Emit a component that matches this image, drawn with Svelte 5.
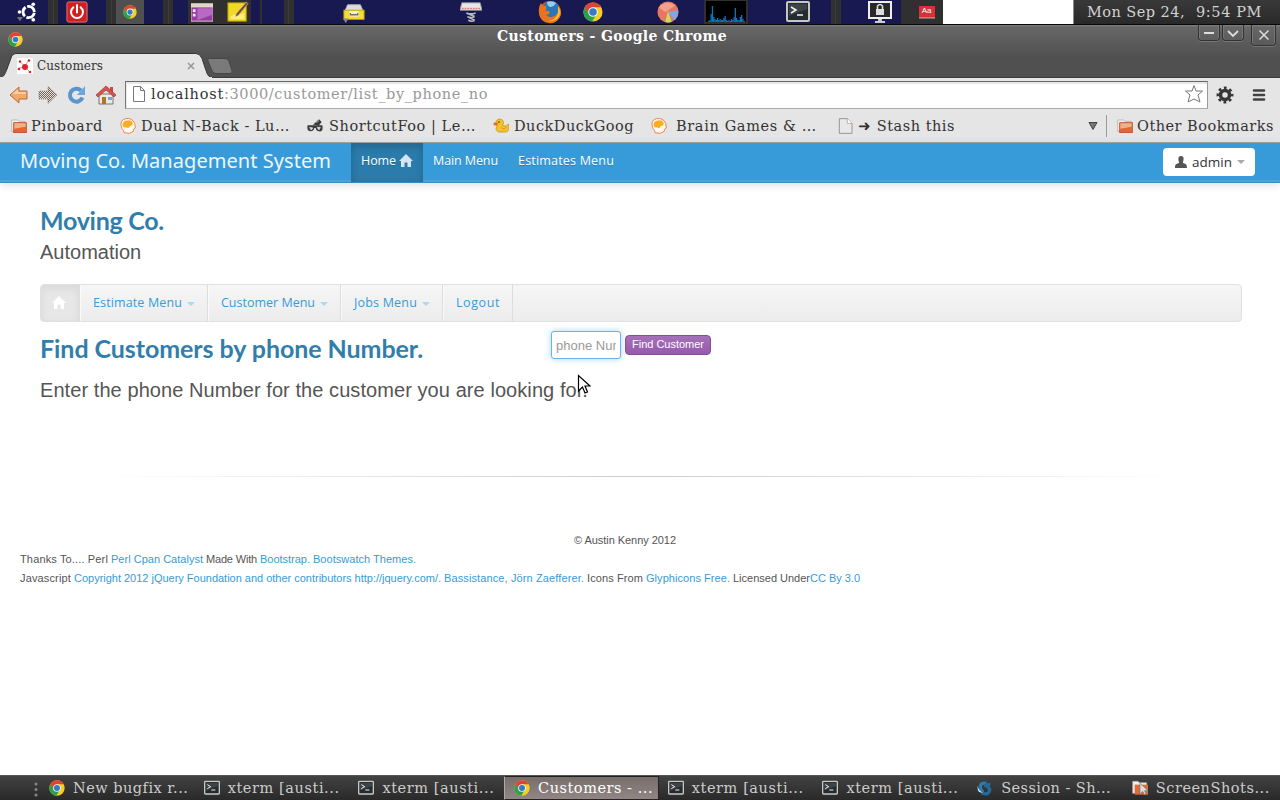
<script>
  // Spreads a label over an exact width through its letter spacing.
  function fit(node, width) {
    if (!width) return;
    const natural = node.getBoundingClientRect().width;
    const count = [...node.textContent].length;
    node.style.letterSpacing = `${(width - natural) / count}px`;
  }

  const cells = [
    { w: 48, tone: 'navy', icon: 'ubuntu', x: 17, iw: 20 },
    { w: 10, tone: 'grip' },
    { w: 48, tone: 'navy', icon: 'power', x: 8, iw: 22 },
    { w: 10, tone: 'grip' },
    { w: 28, tone: 'lit', icon: 'chrome', x: 7, iw: 14 },
    { w: 19, tone: 'navy' },
    { w: 10, tone: 'grip' },
    { w: 15, tone: 'navy' },
    { w: 32, tone: 'dark', icon: 'window', x: 3, iw: 22 },
    { w: 31, tone: 'dark', icon: 'note', x: 7, iw: 22 },
    { w: 9, tone: 'navy' },
    { w: 2, tone: 'dark' },
    { w: 22, tone: 'navy' },
    { w: 10, tone: 'grip' },
    { w: 160, tone: 'navy', icon: 'cabinet', x: 49, iw: 22 },
    { w: 80, tone: 'navy', icon: 'spring', x: 6, iw: 22 },
    { w: 45, tone: 'navy', icon: 'firefox', x: 4, iw: 24 },
    { w: 68, tone: 'navy', icon: 'chrome', x: 4, iw: 20 },
    { w: 57, tone: 'navy', icon: 'pie', x: 10, iw: 22 },
    { w: 44, tone: 'dark', icon: 'graph', x: 2, iw: 40 },
    { w: 83, tone: 'navy', icon: 'terminal', x: 38, iw: 24 },
    { w: 10, tone: 'grip' },
    { w: 60, tone: 'navy', icon: 'lock', x: 27, iw: 24 },
    { w: 42, tone: 'dark', icon: 'dictionary', x: 18, iw: 16 },
    { w: 131, tone: 'white' }
  ];

  const bookmarks = [
    { x: 11, icon: 'folder', w: 72, gap: 4, text: 'Pinboard' },
    { x: 17, icon: 'brain', w: 149, gap: 5, text: 'Dual N-Back - Lu…' },
    { x: 17, icon: 'mask', w: 147, gap: 6, text: 'ShortcutFoo | Le…' },
    { x: 17, icon: 'duck', w: 120, gap: 5, text: 'DuckDuckGoog' },
    { x: 17, icon: 'brain', w: 141, gap: 9, text: 'Brain Games & …' },
    { x: 21, icon: 'page', w: 97, gap: 4, text: '➜ Stash this' }
  ];

  const tasks = [
    { icon: 'chrome', text: 'New bugfix r...', w: 115 },
    { icon: 'terminal', text: 'xterm [austi...', w: 112 },
    { icon: 'terminal', text: 'xterm [austi...', w: 112 },
    { icon: 'chrome', text: 'Customers - ...', w: 115, active: true },
    { icon: 'terminal', text: 'xterm [austi...', w: 112 },
    { icon: 'terminal', text: 'xterm [austi...', w: 112 },
    { icon: 'swirl', text: 'Session - Sh...', w: 110 },
    { icon: 'shots', text: 'ScreenShots...', w: 114 }
  ];

  const menus = [
    { text: 'Estimate Menu', w: 89, cell: 128, caret: true },
    { text: 'Customer Menu', w: 94, cell: 133, caret: true },
    { text: 'Jobs Menu', w: 63, cell: 102, caret: true },
    { text: 'Logout', w: 44, cell: 70, caret: false }
  ];

  const bars = [1, 2, 8, 16, 5, 3, 2, 4, 2, 3, 2, 2, 4, 6, 2, 1, 2, 1, 3, 2, 5, 14, 4, 2, 2, 5, 7, 3, 1];
</script>

{#snippet icon(name, w)}
  {#if name === 'graph'}
    <svg width={w} height="22" viewBox="0 0 40 22">
      <rect width="40" height="21" fill="#000" />
      {#each bars as h, i}<rect x={2 + i * 1.27} y={21 - h} width="1.3" height={h} fill="#0878bd" />{/each}
    </svg>
  {:else}
    <svg width={w} height={w} viewBox="0 0 24 24">
      {#if name === 'ubuntu'}
        <circle cx="14" cy="12" r="6.8" fill="none" stroke="#fff" stroke-width="3.4" stroke-dasharray="12.2 2" stroke-dashoffset="-1" />
        <g fill="#fff"><circle cx="3" cy="12" r="2.2" /><circle cx="19.500" cy="2.700" r="2.200" /><circle cx="19.500" cy="21.300" r="2.200" /></g>
        <path d="M0 18h7l-3.5 5z" fill="#777" />
      {:else if name === 'power'}
        <rect x="1" y="1" width="22" height="22" rx="2" fill="#cf2020" stroke="#e97878" />
        <path d="M8 7a6.500 6.500 0 1 0 8 0M12 4.5v8" fill="none" stroke="#fff" stroke-width="2.200" stroke-linecap="round" />
      {:else if name === 'chrome'}
        <circle cx="12" cy="12" r="11.5" fill="#f7cf24" />
        <path d="M2 6.3A11.5 11.5 0 0 1 22 6.3H12l-5 8.6z" fill="#dc4535" />
        <path d="M2 6.3A11.5 11.5 0 0 0 11 23.5l5.2-8.7-9-.1z" fill="#28a34a" />
        <circle cx="12" cy="12" r="5.8" fill="#eef4fb" /><circle cx="12" cy="12" r="4.5" fill="#367bc5" />
      {:else if name === 'window'}
        <rect x="0" y="3" width="24" height="19" fill="#9a3aa9" stroke="#d9d5c0" />
        <rect x="0" y="3" width="24" height="4" fill="#ded9c2" />
        <path d="M7 8h16v7L7 21z" fill="#b869c3" /><path d="M2 9h3v3H2zM2 14h3v3H2z" fill="#eee" />
      {:else if name === 'note'}
        <rect x="1" y="2" width="20" height="20" fill="#f3d927" stroke="#b59800" />
        <path d="M4 17q5-4 9-2l6-2v7H4z" fill="#fff080" /><path d="M10 14L21 1l2 2-11 13-3 1z" fill="#715039" stroke="#e5c791" stroke-width=".6" />
      {:else if name === 'cabinet'}
        <path d="M5 4h14l3 7H2z" fill="#ddd" stroke="#aaa" /><rect x="1" y="10" width="22" height="10" fill="#f3dc38" stroke="#bca510" />
        <path d="M7 11h10v6H7z" fill="#f5f0d0" /><path d="M8 13v2h8v-2" fill="none" stroke="#77735c" stroke-width="1.500" /><path d="M0 19h6l-3 5z" fill="#888" />
      {:else if name === 'spring'}
        <path d="M2 2h20l2 8H0z" fill="#e8e8e8" stroke="#999" /><path d="M2 8h20" stroke="#d55" stroke-dasharray="2 1" />
        <path d="M7 13q5 2 10 0M7 13l9 4M8 17q4 2 8 0M8 17l8 4M9 21q4 2 7 0" fill="none" stroke="#bbb" stroke-width="1.700" />
      {:else if name === 'firefox'}
        <circle cx="12" cy="12" r="11" fill="#d6561b" /><circle cx="13" cy="9" r="8" fill="#2976b8" /><path d="M9 2q5-2 9 1-2 4-6 4-3-1-3-5z" fill="#8dd0f0" />
        <path d="M3 3q1 3 5 3 1 3-1 5 3-1 5 1-1 3-4 3 6 5 11-1 2-3 1-7 5 4 2 10-4 7-11 6Q2 22 1 13 0 7 3 3z" fill="#e8741d" />
        <path d="M20 6q5 7-1 13-5 3-9 2 8-1 10-8z" fill="#f7bd35" />
      {:else if name === 'pie'}
        <circle cx="12" cy="12" r="11.5" fill="#e97662" /><path d="M2 7q8-9 18-2L9 12z" fill="#f3a18b" /><path d="M12 12l11-2q1 6-4 11z" fill="#7fa9e5" /><path d="M12 11l4 11.5q-4 2-7 0z" fill="#c9dc5d" />
      {:else if name === 'terminal'}
        <rect x="1" y="2" width="22" height="19" rx="1" fill="#252c30" stroke="#c7c7c2" stroke-width="2" />
        <path d="M3 4h18v5L3 16z" fill="#4c5258" opacity=".6" /><path d="M5 7l5 3-5 3M11 15h6" fill="none" stroke="#f4f4f4" stroke-width="1.5" />
      {:else if name === 'lock'}
        <rect x="1" y="2" width="22" height="16" fill="#292929" stroke="#eee" stroke-width="2" /><path d="M8 9h8v6H8z" fill="#ddd" /><path d="M9.5 9V6q2.5-3 5 0v3" fill="none" stroke="#ddd" stroke-width="1.6" /><path d="M10 19h4v2h3v2H7v-2h3z" fill="#ccc" />
      {:else if name === 'dictionary'}
        <rect y="3" width="24" height="18" fill="#d43238" /><path d="M0 21h24" stroke="#eee" /><text x="4" y="14" font-size="12" fill="#fff" font-family="Liberation Sans">Aa</text>
      {:else if name === 'folder'}
        <path d="M1 3h9l2 2h9v15H1z" fill="#f4f4f2" stroke="#a5a5a5" /><rect x="4" y="7" width="19" height="15" fill="#df6736" stroke="#bb3c1b" /><path d="M5 8h17v5L5 16z" fill="#f3b087" />
      {:else if name === 'brain'}
        <path d="M6 22q0-4-3-6Q-2 4 8 1q10-2 14 7l1 7-3 2v3l-6 3z" fill="#fffaf3" stroke="#ed8548" stroke-width="1.5" /><path d="M4 12q-1-7 5-8 8-2 10 3 1 4-4 5-2 5-6 2-3 1-5-2z" fill="#fbae22" />
      {:else if name === 'mask'}
        <path d="M1 11h22q2 10-5 9-4 0-5-5h-2q-1 5-6 5-6-1-4-9zM9 10l9-8 4 4-4 5z" fill="#3b3b3b" /><path d="M4 14l5 1-3 3zM15 14h5l-2 4zM14 7l4-3" fill="#ddd" stroke="#ddd" />
      {:else if name === 'duck'}
        <path d="M6 13Q2 9 5 4q5-5 10 0 2 4-1 7 5 3 10-2 1 10-4 12H9q-7-3-3-8z" fill="#f5c327" stroke="#c18316" /><path d="M1 7h6v4H1z" fill="#e96721" /><circle cx="9" cy="6" r="1" /><path d="M13 15q4 3 7-1" fill="none" stroke="#ba830f" />
      {:else if name === 'page'}
        <path d="M2 1h12l7 7v15H2z" fill="#e8e8e8" stroke="#8b8b8b" stroke-width="1.3" /><path d="M14 1v7h7" fill="#fff" stroke="#999" />
      {:else if name === 'swirl'}
        <g fill="none" stroke-width="5"><path d="M14 5q-9-2-9 6 0 5 5 7" stroke="#297eae" /><path d="M20 7q-7-1-7 4M7 19q10 5 12-4 0-3-4-5" stroke="#236a99" /></g><path d="M1 8q1 9 8 11-8 0-8-6z" fill="#d8eaf5" />
      {:else if name === 'shots'}
        <path d="M1 2h8l2 2h11v16H1z" fill="#eee" stroke="#aaa" /><rect x="4" y="7" width="20" height="15" fill="#df6b36" /><path d="M12 5v16l4-4 3 5 2-1-2-5h5z" fill="#ddd" stroke="#777" />
      {/if}
    </svg>
  {/if}
{/snippet}

{#snippet house(fill)}
  <svg class="house" width="14" height="13" viewBox="0 0 14 13"><path d="M7 0l7 7h-2v6H8.500V8.500h-3V13H2V7H0z" {fill} /></svg>
{/snippet}

<main>
  <header class="panel">
    {#each cells as c}
      <div class="cell {c.tone}" style:width="{c.w}px" style:padding-left="{c.x ?? 0}px">
        {#if c.icon}{@render icon(c.icon, c.iw)}{/if}
      </div>
    {/each}
    <div class="clock"><span use:fit={98}>Mon Sep 24,</span><span class="hour" use:fit={66}>9:54 PM</span></div>
  </header>

  <section class="titlebar">
    <div class="caption">
      <span class="app">{@render icon('chrome', 15)}</span>
      <strong use:fit={230}>Customers - Google Chrome</strong>
      <div class="controls">
        <i class="ctl"><svg width="12" height="12"><path d="M1 6h10" stroke="#ddd" stroke-width="2" /></svg></i>
        <i class="ctl"><svg width="12" height="12"><path d="M1 4l5 5 5-5" fill="none" stroke="#ddd" stroke-width="1.8" /></svg></i>
        <i class="ctl close"><svg width="12" height="12"><path d="M1.500 1.500l9 9M10.500 1.500l-9 9" stroke="#ddd" stroke-width="1.500" /></svg></i>
      </div>
    </div>
    <div class="tabs">
      <div class="tab">
        <svg class="shape" width="212" height="25"><path d="M0 24.500C4 24 5 21 7 16L11 5Q12 .5 17 .5h179q4 0 6 5l4 12q2 7 6 7v1H0z" fill="#e5e5e5" stroke="#353535" /><path d="M0 24h212v1H0z" fill="#e5e5e5" /></svg>
        <svg class="fav" width="16" height="16"><rect width="16" height="16" fill="#fff" /><path d="M8 8L3 4M8 8l4-6M8 9l5 5M7 9l-5 1" stroke="#e99" /><g fill="#d82630"><circle cx="8" cy="9" r="3" /><circle cx="3" cy="3.500" r="1.200" /><circle cx="12" cy="2.500" r="1.300" /><circle cx="13" cy="14" r="1.300" /><circle cx="2" cy="11" r="1.300" /></g></svg>
        <span use:fit={66}>Customers</span>
        <svg class="x" width="8" height="8"><path d="M1 1l6 6M7 1L1 7" stroke="#999" stroke-width="1.6" /></svg>
      </div>
      <svg class="newtab" width="26" height="16"><path d="M2 .5h16q3 0 4 3l3 9q1 3-2 3H9q-3 0-4-3L1 3Q0 .5 2 .5z" fill="#7a7a7a" stroke="#454545" /></svg>
    </div>
  </section>

  <section class="toolbar">
    <svg width="20" height="20" viewBox="0 0 20 20"><path d="M1 10l9-8v4h8v8h-8v4z" fill="#f2a76b" stroke="#b96c34" /><path d="M3 9l6-5v3h8v2z" fill="#f9cca2" /></svg>
    <svg width="20" height="20" viewBox="0 0 20 20"><defs><pattern id="dots" width="2" height="2" patternUnits="userSpaceOnUse"><path d="M0 0h1v1H0zM1 1h1v1H1z" fill="#756050" /></pattern></defs><path d="M19 10l-9-8.500V6H1v8h9v4.500z" fill="url(#dots)" stroke="#8b8580" stroke-dasharray="1 1" /></svg>
    <svg width="20" height="20" viewBox="0 0 20 20"><path d="M15.500 12.500A6.500 6.500 0 1 1 14 5.500" fill="none" stroke="#5c94ce" stroke-width="4" /><path d="M18 1v9h-8z" fill="#6ca5dc" /></svg>
    <svg width="20" height="20" viewBox="0 0 20 20"><path d="M3 9h14v10H3z" fill="#eee9df" stroke="#777" /><path d="M14 2h3v6h-3z" fill="#c34a45" /><path d="M0 10l10-9 10 9-2 2-8-7-8 7z" fill="#d85453" stroke="#9d3433" stroke-width=".700" /><path d="M6 12h4v7H6z" fill="#ae7728" /><path d="M12 12h4v3h-4z" fill="#7ba4d9" /></svg>
    <div class="url">
      <svg width="12" height="16"><path d="M.5.500h7l4 4v11H.5zM7.500.500v4h4" fill="#fff" stroke="#777" /></svg>
      <span class="host" use:fit={73}>localhost</span><span class="path" use:fit={264}>:3000/customer/list_by_phone_no</span>
      <svg class="star" width="20" height="19" viewBox="0 0 20 19"><path d="M10 1.500l2 5.500h6.500l-4.500 4 2 7-6-3-6 3 2-7-4.500-4H8z" fill="#fff" stroke="#777" stroke-linejoin="round" /></svg>
    </div>
    <svg class="gear" width="18" height="18" viewBox="0 0 18 18"><circle cx="9" cy="9" r="4.500" fill="none" stroke="#373737" stroke-width="3.500" /><circle cx="9" cy="9" r="7.200" fill="none" stroke="#373737" stroke-width="2.500" stroke-dasharray="2.830 2.830" stroke-dashoffset="1.410" /></svg>
    <svg class="burger" width="14" height="14"><path d="M2 2.500h10M2 7h10M2 11.500h10" stroke="#414141" stroke-width="2.600" stroke-linecap="round" /></svg>
  </section>

  <section class="bookmarks">
    {#each bookmarks as b}
      <a href="#b" style:margin-left="{b.x}px" style:gap="{b.gap}px">{@render icon(b.icon, 16)}<span use:fit={b.w}>{b.text}</span></a>
    {/each}
    <svg class="more" width="10" height="8"><path d="M1 .5h8l-4 7z" fill="#777" stroke="#444" /></svg>
    <a class="other" href="#b">{@render icon('folder', 16)}<span use:fit={137}>Other Bookmarks</span></a>
  </section>

  <section class="page">
    <nav class="navbar">
      <a class="brand" href="#h"><span use:fit={311}>Moving Co. Management System</span></a>
      <a class="on" href="#h"><span use:fit={35}>Home</span>{@render house('#d4e6f2')}</a>
      <a href="#m"><span use:fit={65}>Main Menu</span></a>
      <a href="#e"><span use:fit={96}>Estimates Menu</span></a>
      <button class="user"><svg width="12" height="12"><path d="M6 0c3 0 3 3 2 6v1c3 1 4 1 4 5H0C0 8 1 8 4 7V6C3 3 3 0 6 0z" fill="#555" /></svg><span use:fit={40}>admin</span><i class="caret"></i></button>
    </nav>

    <div class="content">
      <h1><span use:fit={124}>Moving Co.</span></h1>
      <p class="lead">Automation</p>
      <nav class="sub">
        <a class="home" href="#h">{@render house('#fff')}</a>
        {#each menus as m}
          <a href="#m" style:width="{m.cell}px"><span use:fit={m.w}>{m.text}</span>{#if m.caret}<i class="caret"></i>{/if}</a>
        {/each}
      </nav>
      <div class="find">
        <h2><span use:fit={383}>Find Customers by phone Number.</span></h2>
        <input placeholder="phone Number" aria-label="phone Number" />
        <button class="go"><span use:fit={72}>Find Customer</span></button>
      </div>
      <p class="lead enter"><span use:fit={548}>Enter the phone Number for the customer you are looking for.</span></p>
      <svg class="pointer" width="14" height="21" viewBox="0 0 14 21"><path d="M1.500 1.500v15.500l4-4 2.500 6 2.500-1-2.500-6h5z" fill="#fff" stroke="#000" stroke-width="1.200" /></svg>
    </div>
    <hr />
    <footer>
      <p class="copy"><span use:fit={102}>© Austin Kenny 2012</span></p>
      <p><span use:fit={88}>Thanks To.... Perl</span><a href="#p" use:fit={92}>Perl Cpan Catalyst</a><span use:fit={51}>Made With</span><a href="#b" use:fit={50}>Bootstrap.</a><a href="#t" use:fit={103}>Bootswatch Themes.</a></p>
      <p><span use:fit={51}>Javascript</span><a href="#j" use:fit={367}>Copyright 2012 jQuery Foundation and other contributors http://jquery.com/.</a><a href="#z" use:fit={140}>Bassistance, Jörn Zaefferer.</a><span use:fit={56}>Icons From</span><a href="#g" use:fit={84}>Glyphicons Free.</a><span class="license"><span use:fit={77}>Licensed Under</span><a href="#c" use:fit={50}>CC By 3.0</a></span></p>
    </footer>
  </section>

  <footer class="taskbar">
    <svg class="handle" width="4" height="15"><g fill="#888"><circle cx="2" cy="2" r="1.500" /><circle cx="2" cy="7.500" r="1.500" /><circle cx="2" cy="13" r="1.500" /></g></svg>
    {#each tasks as t}
      <div class="task" class:active={t.active}>{@render icon(t.icon, 16)}<span use:fit={t.w}>{t.text}</span></div>
    {/each}
  </footer>
</main>

<style>
  :global(body) { margin: 0; overflow: hidden; }
  main { width: 1280px; height: 800px; display: flex; flex-direction: column; overflow: hidden; background: #fff; font-family: 'DejaVu Serif', serif; font-size: 14.500px; color: #333; }
  main :global(*) { box-sizing: border-box; }
  svg { display: block; flex: none; }
  span, strong, a { white-space: pre; }
  a { text-decoration: none; color: inherit; }

  .panel { height: 25px; display: flex; border-bottom: 1px solid #080808; background: #303030; flex: none; }
  .cell { flex: none; display: flex; align-items: center; }
  .navy { background: #171950; }
  .dark { background: #303030; }
  .lit { background: #505050; }
  .white { background: #fff; border-right: 1px solid #888; }
  .grip { background: linear-gradient(90deg, #303030 45%, #3d3d3d 45% 55%, #303030 55%); }
  .clock { padding-left: 13px; display: flex; align-items: center; gap: 11px; color: #d2d2d2; flex: 1; background: linear-gradient(#393939, #292929); }

  .titlebar { height: 53px; flex: none; background: linear-gradient(#828282 0, #676767 2px, #505050 32px, #505050); }
  .caption { height: 28px; display: flex; }
  .app { padding: 7px 0 0 8px; }
  .caption strong { margin-left: 474px; font-size: 14px; color: #fff; line-height: 23px; }
  .controls { margin-left: auto; padding-right: 4px; display: flex; gap: 2px; }
  .ctl { width: 22px; height: 16px; border: 1px solid #333; border-top: 0; border-radius: 0 0 4px 4px; box-shadow: 0 1px #777, inset -1px 0 #777, inset 1px 0 #777; display: grid; place-items: center; }
  .close { width: 25px; height: 21px; margin-left: 5px; }
  .tabs { display: flex; height: 25px; border-bottom: 1px solid #3b3b3b; }
  .tab { position: relative; width: 212px; height: 25px; flex: none; display: flex; align-items: center; padding-left: 17px; }
  .shape { position: absolute; left: 0; top: 0; }
  .fav { position: relative; margin-right: 4px; }
  .tab span { position: relative; font-size: 12px; }
  .x { position: relative; margin: 1px 0 0 auto; margin-right: 17px; }
  .newtab { margin: 5px 0 0 -5px; position: relative; }

  .toolbar { height: 32px; flex: none; background: #e5e5e5; display: flex; align-items: center; padding: 1px 0 0 9px; gap: 9px; }
  .url { width: 1083px; height: 28px; margin-top: 1px; flex: none; display: flex; align-items: center; padding: 0 3px 2px 7px; background: #fff; border: 1px solid #777; border-color: #666 #999 #aaa #777; box-shadow: inset 1px 2px #e8e8e8; }
  .toolbar .url { margin-top: 0; }
  .host { margin-left: 6px; }
  .path { color: #999; }
  .star { margin-left: auto; }
  .gear { margin-left: -1px; }
  .burger { margin-left: 9px; }

  .bookmarks { height: 33px; flex: none; background: #e5e5e5; border-bottom: 1px solid #a5a5a5; display: flex; align-items: center; }
  .bookmarks a { display: flex; align-items: center; flex: none; }
  .more { margin-left: auto; margin-right: 8px; }
  .bookmarks .other { padding-left: 10px; padding-right: 6px; gap: 4px; border-left: 1px solid #999; height: 22px; }

  .page { flex: 1; background: #fff; font-family: 'Liberation Sans', Arial, sans-serif; color: #555; }
  .navbar { height: 40px; background: #379bd9; border-bottom: 1px solid #378bc0; box-shadow: 0 2px 8px #0002, inset 0 -2px #4ba2dc; display: flex; padding-left: 20px; color: #fff; font: 12.500px 'Open Sans', sans-serif; text-shadow: 0 1px #0003; }
  .navbar a { height: 39px; display: flex; padding: 0 10px; line-height: 35px; }
  .navbar .brand { padding: 0 20px 0 0; font-size: 20px; line-height: 36px; font-family: 'Noto Sans', sans-serif; font-weight: 400; color: #eef6fc; text-shadow: none; }
  .on { background: #2b7cac; box-shadow: inset 0 3px 8px #0003; }
  .on .house { margin: 11px 0 0 3px; }
  .user { margin: 5px 25px 0 auto; width: 92px; height: 28px; border: 0; border-radius: 4px; background: #fff; color: #333; padding: 0 11px 1px 12px; display: flex; align-items: center; gap: 5px; font: 13.500px 'Open Sans', sans-serif; }
  .caret { width: 0; height: 0; flex: none; border: 4px solid transparent; border-top-color: #aaa; border-bottom: 0; }
  .content { position: relative; padding: 20px 38px 0 40px; height: 293px; }
  h1, h2 { margin: 0; color: #317eac; font: bold 25px/34px Lato, sans-serif; }
  p { margin: 0; }
  .lead { font-size: 20px; line-height: 30px; }
  .sub { margin-top: 17px; height: 38px; display: flex; border: 1px solid #e0e0e0; border-radius: 4px; background: linear-gradient(#f6f6f6, #ececec); color: #379bd9; font: 12.500px 'Open Sans', sans-serif; overflow: hidden; }
  .sub a { padding: 0 0 1px 12px; display: flex; align-items: center; border-right: 1px solid #ddd; border-left: 1px solid #fafafa; flex: none; }
  .sub .home { width: 39px; padding-left: 11px; border-left: 0; background: #e7e7e7; box-shadow: inset 0 3px 8px #0001; }
  .sub .caret { margin: 2px 0 0 5px; border-top-color: #b3d6ec; }
  .find { margin-top: 9px; display: flex; height: 34px; }
  .find h2 { width: 511px; }
  input { width: 70px; height: 28px; padding: 0 4px; border: 1px solid #68b2ed; border-radius: 3px; box-shadow: 0 0 6px #82bdf0aa; font: 13px 'Liberation Sans', sans-serif; outline: 0; }
  input::placeholder { color: #999; }
  .go { margin: 4px 0 0 4px; width: 86px; height: 20px; padding: 0 0 2px; border: 1px solid #844d9b; border-radius: 4px; background: linear-gradient(#a570b9, #9659ad); color: #fff; font: 11px 'Liberation Sans', sans-serif; }
  .enter { margin-top: 10px; }
  .pointer { position: absolute; left: 577px; top: 191px; }
  hr { margin: 0 100px; height: 1px; border: 0; background: linear-gradient(90deg, #fff0, #ccc 50%, #fff0); }
  .page footer { padding: 54px 30px 0 20px; font-size: 11px; line-height: 19px; }
  .page footer p { display: flex; gap: 3px; }
  .page footer .copy { justify-content: center; padding-right: 20px; }
  .page footer a { color: #379bd9; }
  .license { display: flex; }

  .taskbar { height: 25px; flex: none; background: linear-gradient(#424242, #292929); border-top: 1px solid #555; display: flex; align-items: center; color: #ccc; }
  .handle { margin: 2px 0 0 34px; }
  .task { width: 154.700px; flex: none; height: 24px; display: flex; align-items: center; padding-left: 9px; gap: 8px; }
  .taskbar .handle + .task { margin-left: 2px; }
  .active { background: linear-gradient(#776d6b, #918683); color: #fff; border: 1px solid #222; border-left-color: #aaa; }
</style>
